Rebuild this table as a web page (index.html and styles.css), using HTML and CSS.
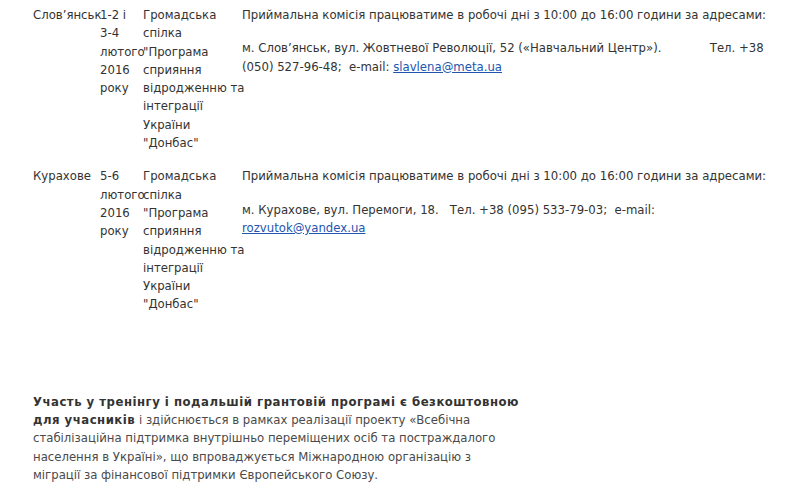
FILE: index.html
```html
<!DOCTYPE html>
<html lang="uk">
<head>
  <meta charset="UTF-8">
  <meta name="viewport" content="width=device-width, initial-scale=1.0">
  <title>Тренінг</title>
  <link rel="stylesheet" href="styles.css">
</head>
<body>
  <div class="content">
    <table class="schedule">
      <colgroup>
        <col class="col-city">
        <col class="col-date">
        <col class="col-org">
        <col class="col-info">
      </colgroup>
      <tr>
        <td>Слов’янськ</td>
        <td>1-2 і <span class="nowrap">3-4</span> лютого 2016 року</td>
        <td>Громадська спілка "Програма сприяння <span class="nowrap">відродженню та</span> інтеграції України "Донбас"</td>
        <td>
          <p>Приймальна комісія працюватиме в робочі дні з 10:00 до 16:00 години за адресами:</p>
          <p>м. Слов’янськ, вул. Жовтневої Революції, 52 («Навчальний Центр»).&nbsp;&nbsp;&nbsp;&nbsp;&nbsp;&nbsp;&nbsp;&nbsp;&nbsp;&nbsp;&nbsp;&nbsp; Тел. +38 (050) 527-96-48;&nbsp; e-mail: <a href="#">slavlena@meta.ua</a></p>
        </td>
      </tr>
      <tr>
        <td>Курахове</td>
        <td>5-6 лютого 2016 року</td>
        <td>Громадська спілка "Програма сприяння <span class="nowrap">відродженню та</span> інтеграції України "Донбас"</td>
        <td>
          <p>Приймальна комісія працюватиме в робочі дні з 10:00 до 16:00 години за адресами:</p>
          <p>м. Курахове, вул. Перемоги, 18.&nbsp;&nbsp; Тел. +38 (095) 533-79-03;&nbsp; e-mail: <a href="#">rozvutok@yandex.ua</a></p>
        </td>
      </tr>
    </table>

    <p class="note"><strong>Участь у тренінгу і подальшій грантовій програмі є безкоштовною для учасників</strong> і здійснюється в рамках реалізації проекту «Всебічна стабілізаційна підтримка внутрішньо переміщених осіб та постраждалого населення в Україні», що впроваджується Міжнародною організацію з міграції за фінансової підтримки Європейського Союзу.</p>
  </div>
</body>
</html>
```

FILE: styles.css
```css
body {
  margin: 0;
  font-family: "DejaVu Sans Condensed", "DejaVu Sans", sans-serif;
  font-size: 13px;
  line-height: 18.3px;
  color: #333;
  background: #fff;
}

.content {
  padding: 6px 20px 0 33px;
}

.schedule {
  width: 733px;
  table-layout: fixed;
  border-collapse: collapse;
}

.col-city { width: 67px; }
.col-date { width: 43px; }
.col-org  { width: 99px; }

.schedule td {
  padding: 0 0 15px 0;
  vertical-align: top;
}

.schedule p {
  margin: 0 0 15px 0;
}

.schedule p:last-child {
  margin-bottom: 0;
}

.schedule a {
  color: #2255b0;
}

.nowrap {
  white-space: nowrap;
}

.note {
  width: 487px;
  margin: 64px 0 0 0;
  color: #4a4a4a;
}

.note strong {
  color: #333;
  letter-spacing: 0.5px;
}
```
